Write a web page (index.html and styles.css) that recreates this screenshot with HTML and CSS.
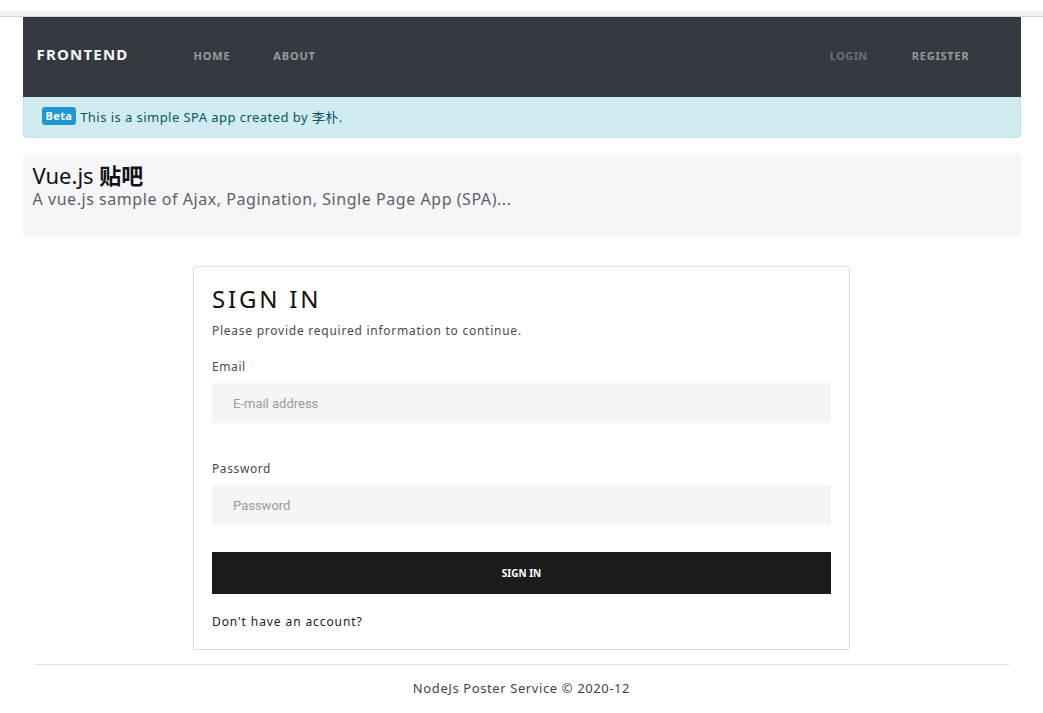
FILE: index.html
```html
<!DOCTYPE html>
<html lang="en">
<head>
<meta charset="utf-8">
<title>Frontend</title>
<link rel="stylesheet" href="styles.css">
</head>
<body>
<div class="topstrip"></div>
<div class="container">
  <nav class="navbar">
    <a class="brand">FRONTEND</a>
    <ul class="nav nav-left">
      <li><a>HOME</a></li>
      <li><a>ABOUT</a></li>
    </ul>
    <ul class="nav nav-right">
      <li><a class="muted">LOGIN</a></li>
      <li><a>REGISTER</a></li>
    </ul>
  </nav>
  <div class="alert"><span class="badge">Beta</span> This is a simple SPA app created by 李朴.</div>
  <div class="jumbo">
    <h1 class="jumbo-title">Vue.js <b>贴吧</b></h1>
    <p class="jumbo-sub">A vue.js sample of Ajax, Pagination, Single Page App (SPA)...</p>
  </div>
  <main class="main">
    <div class="card">
      <h2 class="card-title">SIGN IN</h2>
      <p class="card-sub">Please provide required information to continue.</p>
      <div class="field">
        <label class="label">Email</label>
        <input class="input" type="text" placeholder="E-mail address">
      </div>
      <div class="field">
        <label class="label">Password</label>
        <input class="input" type="password" placeholder="Password">
      </div>
      <button class="btn">SIGN IN</button>
      <p class="signup">Don't have an account?</p>
    </div>
  </main>
  <footer class="footer">NodeJs Poster Service © 2020-12</footer>
</div>
</body>
</html>
```
FILE: styles.css
```css
* { box-sizing: border-box; }
html, body { margin: 0; padding: 0; background: #fff; }
body {
  font-family: "Noto Sans", "Open Sans", "Noto Sans CJK SC", sans-serif;
  color: #212529;
}
.topstrip {
  height: 17px;
  background: linear-gradient(to bottom, #ffffff 0px, #ffffff 10px, #eeeeee 13px, #f3f3f3 15px);
  border-bottom: 1px solid #d4d4d4;
}
.container {
  width: 998px;
  margin: 0 auto;
}
.navbar {
  height: 80px;
  background: #343a40;
  display: flex;
  align-items: center;
  padding: 0 14px;
}
.brand {
  color: #f8f9fa;
  font-weight: 700;
  font-size: 15px;
  letter-spacing: 1.2px;
  margin-top: -6px;
  width: 157px;
}
.nav {
  list-style: none;
  margin: -4px 0 0;
  padding: 0;
  display: flex;
}
.nav a {
  display: block;
  font-size: 11px;
  font-weight: 700;
  letter-spacing: 0.8px;
  color: #9a9b9c;
  margin-right: 43px;
}
.nav-left { flex: 1; }
.nav-right li:first-child a { margin-right: 44px; }
.nav-right li:last-child a { margin-right: 37px; }
.nav a.muted { color: #6c7075; letter-spacing: 0.4px; }
.alert {
  height: 41px;
  background: #d1ecf1;
  border: 1px solid #bee5eb;
  border-top: none;
  border-radius: 0 0 4px 4px;
  color: #0c5460;
  font-size: 13px;
  letter-spacing: 0.45px;
  display: flex;
  align-items: center;
  padding: 0 18px 2px;
  white-space: pre;
}
.badge {
  background: #1f9bd1;
  color: #fff;
  font-size: 11px;
  font-weight: 700;
  padding: 1px 4px 2px;
  border-radius: 3px;
  letter-spacing: 0.4px;
}
.jumbo {
  margin-top: 15px;
  background: #f6f6f8;
  border-radius: 4px;
  height: 84px;
  padding: 8px 10px;
}
.jumbo-title {
  margin: 0;
  font-size: 22px;
  font-weight: 400;
  line-height: 28px;
  color: #111;
}
.jumbo-title b { font-weight: 700; }
.jumbo-sub {
  margin: 0;
  font-size: 16px;
  line-height: 20px;
  color: #606066;
  letter-spacing: 0.55px;
}
.main {
  display: flex;
  justify-content: center;
  padding-top: 29px;
}
.card {
  width: 657px;
  border: 1px solid #dcdcdc;
  border-radius: 3px;
  padding: 16px 18px 19px;
}
.card-title {
  margin: 0;
  font-size: 24px;
  font-weight: 400;
  letter-spacing: 2.8px;
  line-height: 32px;
  color: #111;
}
.card-sub {
  margin: 7px 0 0;
  font-size: 12px;
  letter-spacing: 0.75px;
  color: #4a4a50;
}
.field { margin-top: 19px; }
.field + .field { margin-top: 37px; }
.label {
  display: block;
  font-size: 12px;
  letter-spacing: 0.6px;
  color: #4a4a4a;
  margin-bottom: 8px;
}
.input {
  display: block;
  width: 100%;
  height: 40px;
  border: none;
  background: #f5f5f7;
  padding: 0 21px;
  font-family: Roboto, "Noto Sans", sans-serif;
  font-size: 13px;
  color: #333;
  outline: none;
}
.input::placeholder { color: #9c9c9c; }
.btn {
  display: block;
  width: 100%;
  height: 42px;
  margin-top: 27px;
  border: none;
  background: #1b1b1b;
  color: #fff;
  font-family: "Noto Sans", sans-serif;
  font-size: 10px;
  font-weight: 700;
}
.signup {
  margin: 19px 0 0;
  font-size: 12px;
  letter-spacing: 0.9px;
  color: #222;
}
.footer {
  margin: 14px 12px 0;
  border-top: 1px solid #e2e2e2;
  text-align: center;
  padding-top: 14px;
  font-size: 13px;
  letter-spacing: 0.6px;
  color: #444;
}
```
